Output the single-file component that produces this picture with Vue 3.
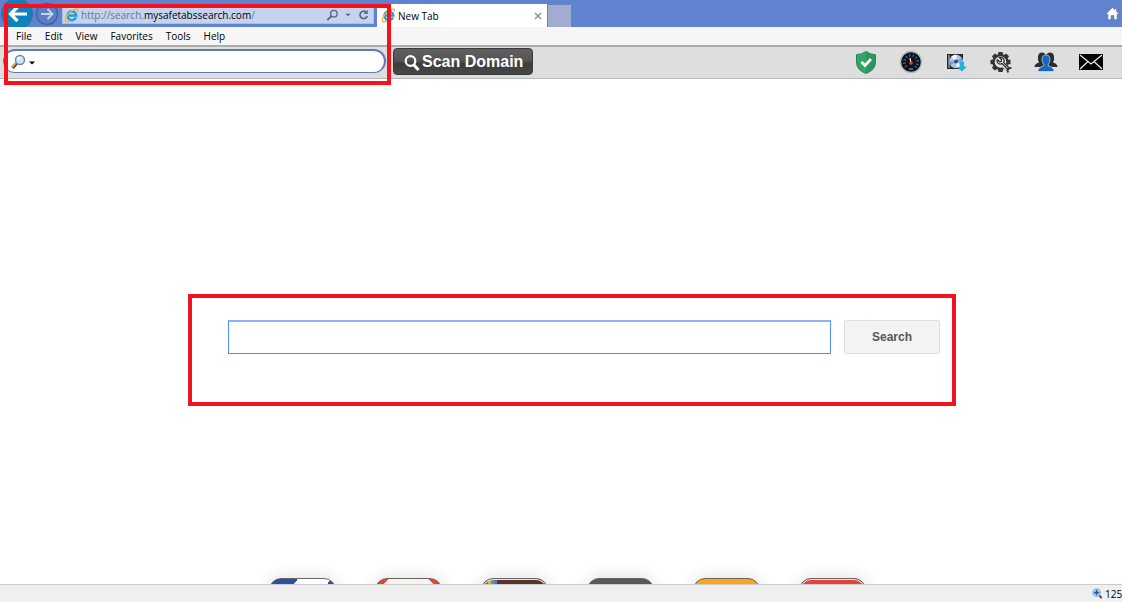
<script setup>
import { ref } from 'vue'

const address = ref('')
const query = ref('')
const menus = ['File', 'Edit', 'View', 'Favorites', 'Tools', 'Help']
const tiles = ['facebook', 'mail', 'camera', 'dark', 'orange', 'red']
const ticks = [-130, -100, -70, -40, -10, 20, 50, 80, 110, 135]
const teeth = [0, 45, 90, 135, 180, 225, 270, 315]
</script>

<template>
  <div class="browser">
    <header class="titlebar">
      <button class="nav back" aria-label="Back">
        <svg viewBox="0 0 32 32" width="32" height="32">
          <circle cx="16" cy="16" r="15.5" fill="#0c83bd" stroke="#3c69ae" />
          <path d="M26 16H10M16.500 9L9.500 16l7 7" fill="none" stroke="#fff" stroke-width="3.200" />
        </svg>
      </button>
      <button class="nav forward" aria-label="Forward">
        <svg viewBox="0 0 24 24" width="24" height="24">
          <circle cx="12" cy="12" r="10.500" fill="#5a7ec8" stroke="#48609b" stroke-width="1.300" />
          <path d="M6 12h11M12.500 7l5 5-5 5" fill="none" stroke="#c9d5ef" stroke-width="1.800" />
        </svg>
      </button>
      <div class="address">
        <svg class="ie" viewBox="0 0 16 16" width="15" height="15">
          <path d="M12.800 10.200A4.800 4.800 0 1 1 13.200 8H5" fill="none" stroke="#249bdc" stroke-width="2.500" />
          <path d="M2.200 14.500C-1 12 6 2.500 13 1.300c2-.3 2 1.200 1.200 2.700M2.200 14.500c1.300.5 3-.3 4-1" fill="none" stroke="#eeb52d" stroke-width="1.400" />
        </svg>
        <span class="url">http://search.<b>mysafetabssearch.com</b>/</span>
        <button class="tool" aria-label="Search address">
          <svg viewBox="0 0 14 14" width="13" height="13"><circle cx="8.500" cy="5" r="3.500" fill="none" stroke="#59647b" stroke-width="1.400" /><path d="M6 7.500L1.500 12" stroke="#59647b" stroke-width="2" /></svg>
        </button>
        <button class="tool caret" aria-label="Show suggestions">
          <svg viewBox="0 0 8 6" width="6" height="4"><path d="M0 1h8L4 5z" fill="#59647b" /></svg>
        </button>
        <button class="tool" aria-label="Refresh">
          <svg viewBox="0 0 14 14" width="13" height="13"><path d="M10 3.500A4 4 0 1 0 11 7.500" fill="none" stroke="#59647b" stroke-width="1.700" /><path d="M11.500 1v4.500H7z" fill="#59647b" /></svg>
        </button>
      </div>
      <div class="tab">
        <svg class="ie" viewBox="0 0 16 16" width="15" height="15">
          <path d="M12.800 10.200A4.800 4.800 0 1 1 13.200 8H5" fill="none" stroke="#249bdc" stroke-width="2.500" />
          <path d="M2.200 14.500C-1 12 6 2.500 13 1.300c2-.3 2 1.200 1.200 2.700M2.200 14.500c1.300.5 3-.3 4-1" fill="none" stroke="#eeb52d" stroke-width="1.400" />
        </svg>
        <span class="tab-name">New Tab</span>
        <button class="tool" aria-label="Close tab">
          <svg viewBox="0 0 8 8" width="8" height="8"><path d="M1 1l6 6M7 1L1 7" stroke="#929292" stroke-width="1.500" /></svg>
        </button>
      </div>
      <button class="new-tab" aria-label="Open new tab"></button>
      <button class="tool home" aria-label="Home">
        <svg viewBox="0 0 13 13" width="13" height="13"><path d="M6.500 0.500L0.500 6.500l1 1L2 7v5.500h3V8.500h3v4h3V7l.5.500 1-1-2-2V1.500H9v1.500z" fill="#fff" stroke="#75778d" stroke-width=".5" /></svg>
      </button>
    </header>

    <nav class="menubar">
      <button v-for="menu in menus" :key="menu">{{ menu }}</button>
    </nav>

    <div class="toolbar">
      <div class="pill">
        <button class="tool engine" aria-label="Choose search engine">
          <svg viewBox="0 0 26 16" width="26" height="16">
            <path d="M5.500 9.500L1.500 14" stroke="#4a3b22" stroke-width="3.200" />
            <path d="M5 9L1 13.500" stroke="#e0a52c" stroke-width="1.800" />
            <circle cx="9" cy="6" r="4.500" fill="#c5ebfb" stroke="#79838e" stroke-width="1.400" />
            <path d="M6.500 5.500Q7 3.500 9.500 3.500" fill="none" stroke="#fff" stroke-width="1.500" />
            <path d="M18 7.500h6l-3 3z" fill="#000" />
          </svg>
        </button>
        <input v-model="address" type="text" aria-label="Toolbar search" />
      </div>
      <button class="scan">
        <svg viewBox="0 0 16 18" width="16" height="18"><circle cx="6.500" cy="8" r="4.800" fill="none" stroke="#fff" stroke-width="2.200" /><path d="M9.500 11.500l5 5.500" stroke="#fff" stroke-width="3" /></svg>
        Scan Domain
      </button>
      <div class="shortcuts">
        <button aria-label="Protection">
          <svg viewBox="0 0 24 24" width="24" height="24">
            <path d="M12 1.500Q16 4.500 21.500 4.700V12q0 8-9.500 11.500Q2.500 20 2.500 12V4.700Q8 4.500 12 1.500z" fill="#35a568" stroke="#238750" />
            <path d="M12 2Q16 5 21 5.200V12q0 7.500-9 11z" fill="#278957" opacity=".55" />
            <path d="M7.500 12l3.500 3.500 6-6.500" fill="none" stroke="#fff" stroke-width="2.600" />
          </svg>
        </button>
        <button aria-label="Speed">
          <svg viewBox="0 0 24 24" width="24" height="24">
            <circle cx="12" cy="12" r="10.500" fill="#111316" stroke="#b4b9bf" stroke-width="1.400" />
            <path v-for="t in ticks" :key="t" d="M12 4v2.500" stroke="#237bc1" stroke-width="1.200" :transform="`rotate(${t} 12 12)`" />
            <path d="M12 13l-1-5" stroke="#fff" stroke-width="1.200" />
            <circle cx="12" cy="13" r="1.800" fill="#d9463d" />
            <path d="M10 18h4v2h-4z" fill="#1973c6" />
          </svg>
        </button>
        <button aria-label="Downloads">
          <svg viewBox="0 0 24 24" width="24" height="24">
            <path d="M3 4h16v15H3z" fill="#25272b" />
            <path d="M4 5h2v13H4z" fill="#70767e" />
            <circle cx="12" cy="11.500" r="6.800" fill="#b4c5dc" />
            <path d="M12 11.500L7 7q3-3 6-2zM12 11.500l6 4q-2 3-5 2.500z" fill="#eef7ff" />
            <path d="M12 11.500l6-4 1 4zM12 11.500l-6 4-1-4z" fill="#6ba0dc" />
            <circle cx="12" cy="11.500" r="2" fill="#344c72" />
            <path d="M15.500 12H20v4.500h3L18 21.500 12.500 17h3z" fill="#21b2da" />
          </svg>
        </button>
        <button aria-label="Settings">
          <svg viewBox="0 0 24 24" width="24" height="24">
            <g fill="#333"><path v-for="t in teeth" :key="t" d="M9.500 2h4l1 4h-6z" :transform="`rotate(${t} 11.500 12)`" /></g>
            <circle cx="11.500" cy="12" r="6.800" fill="#e4e4e4" stroke="#333" stroke-width="2" />
            <path d="M13 13.500l9 8.500" stroke="#dedede" stroke-width="5" />
            <path d="M8.200 9.500l2.300 2.300 1.800-.3.300-1.800-2.200-2.200q3.500-.8 4.600 2 .6 1.600-.3 3.200l6 5.800M8.200 9.500q-.7 3.500 2.200 4.400 1.400.4 2.600-.4l6.500 6.500" fill="none" stroke="#333" stroke-width="1.300" />
            <path d="M18 20.500q1-3 4.500-2.300M19 22.500l-.5-3" fill="none" stroke="#333" stroke-width="1.800" />
          </svg>
        </button>
        <button aria-label="People">
          <svg viewBox="0 0 24 24" width="24" height="24">
            <path d="M.5 17q0-3.500 4.500-4.500Q3.500 10 4 6.500 4.500 2.500 8 2.500q2.500 0 3.500 2h1q1-2 3.500-2 3.500 0 4 4 .5 3.500-1 6 4.500 1 4.500 4.500z" fill="#292c31" />
            <path d="M8 9.500Q8 5 12 5t4 4.500q0 3-1.700 4.700V16q5.700 1 5.700 5.500H4q0-4.500 5.700-5.500v-1.800Q8 12.500 8 9.500z" fill="#1767bd" stroke="#dedede" stroke-width=".7" />
          </svg>
        </button>
        <button aria-label="Mail">
          <svg viewBox="0 0 24 24" width="24" height="24">
            <path d="M0 4h24v16H0z" fill="#000" />
            <path d="M1 5l11 9L23 5M1 19l8-7.500M23 19l-8-7.500" fill="none" stroke="#eee" stroke-width="1.200" />
          </svg>
        </button>
      </div>
    </div>

    <main class="page">
      <form class="search-panel" @submit.prevent>
        <input v-model="query" type="text" aria-label="Search the web" />
        <button type="submit">Search</button>
      </form>
      <div class="tiles">
        <a v-for="tile in tiles" :key="tile" href="#" class="tile" :class="tile" :aria-label="tile"></a>
      </div>
    </main>

    <footer class="statusbar">
      <svg viewBox="0 0 12 12" width="11" height="11">
        <path d="M7.500 7.500l3 3.500" stroke="#6b3d28" stroke-width="2.200" />
        <circle cx="5" cy="5" r="4.200" fill="#bfe1fb" stroke="#82a6cc" />
        <path d="M2 5h6M5 2v6" stroke="#1565b7" stroke-width="1.800" />
      </svg>
      <span>125%</span>
    </footer>

    <div class="marker"></div>
  </div>
</template>

<style>
body {
  margin: 0;
}
</style>

<style scoped>
.browser {
  position: relative;
  display: flex;
  flex-direction: column;
  height: 100vh;
  overflow: hidden;
  background: #fff;
  color: #000;
  font: 10px/14px "Open Sans", "Noto Sans", sans-serif;
}
button {
  margin: 0;
  padding: 0;
  border: 0;
  background: none;
  color: inherit;
  font: inherit;
}
input {
  box-sizing: border-box;
  min-width: 0;
  outline: 0;
}
svg {
  display: block;
  flex: none;
}
.titlebar {
  display: flex;
  box-sizing: border-box;
  flex: none;
  height: 27px;
  overflow: hidden;
  background: #6083cf;
}
.nav {
  flex: none;
}
.back {
  width: 32px;
  height: 32px;
  margin: -2px 0 0 1px;
}
.forward {
  width: 24px;
  height: 24px;
  margin: 2px 3px 0 2px;
}
.address {
  display: flex;
  align-items: center;
  box-sizing: border-box;
  width: 312px;
  height: 18px;
  margin-top: 6px;
  padding: 0 3px 0 1px;
  gap: 6px;
  border: 1px solid #aebede;
  background: #c6d3ee;
}
.url {
  flex: 1;
  margin-left: -4px;
  color: #6b7386;
  white-space: nowrap;
}
.url b {
  color: #000;
  font-weight: 400;
}
.tool {
  display: flex;
  align-items: center;
}
.tab {
  display: flex;
  align-items: center;
  box-sizing: border-box;
  width: 170px;
  height: 23px;
  margin: 4px 0 0 3px;
  padding: 0 5px 0 4px;
  gap: 2px;
  background: #fff;
}
.tab-name {
  flex: 1;
}
.new-tab {
  box-sizing: border-box;
  width: 25px;
  height: 23px;
  margin-top: 4px;
  border: 1px solid #6f82b4;
  border-bottom: 0;
  background: #a0add0;
}
.home {
  margin: 0 3px 0 auto;
}
.menubar {
  display: flex;
  box-sizing: border-box;
  flex: none;
  height: 20px;
  padding-left: 16px;
  gap: 13px;
  border-bottom: 2px solid #adadad;
  background: #f6f6f6;
}
.toolbar {
  display: flex;
  align-items: flex-start;
  box-sizing: border-box;
  flex: none;
  height: 32px;
  padding: 1px 19px 0 3px;
  gap: 7px;
  border-bottom: 1px solid #b4b8bd;
  background: #dedede;
}
.pill {
  display: flex;
  align-items: center;
  box-sizing: border-box;
  width: 383px;
  height: 24px;
  margin-top: 1px;
  padding: 0 12px 0 7px;
  border: 2px solid #5b7cb8;
  border-width: 2px 2px 1px 1px;
  border-radius: 12px;
  background: #fff;
}
.pill input {
  flex: 1;
  border: 0;
  background: none;
}
.scan {
  display: flex;
  align-items: flex-start;
  box-sizing: border-box;
  flex: none;
  height: 27px;
  width: 140px;
  padding: 4px 10px 0;
  gap: 2px;
  border: 1px solid #3a3a3a;
  border-radius: 4px;
  background: linear-gradient(#606060, #555 45%, #3c3c3c 60%, #484848);
  color: #fff;
  font: bold 16px/18px "Liberation Sans", Arial, sans-serif;
  white-space: nowrap;
}
.shortcuts {
  display: flex;
  gap: 21px;
  margin: 2px 0 0 auto;
}
.page {
  display: flex;
  flex: 1;
  flex-direction: column;
  min-height: 0;
  overflow: hidden;
}
.search-panel {
  display: flex;
  flex: none;
  align-items: flex-start;
  margin: 215px 166px 0 188px;
  padding: 22px 12px 48px 36px;
  gap: 13px;
  border: 4px solid #ed1620;
}
.search-panel input {
  flex: 1;
  height: 34px;
  padding: 0 8px;
  border: 1px solid #4d8ff5;
  border-top: 2px solid #8eb1ef;
  background: #fff;
  font: 14px/18px "Liberation Sans", Arial, sans-serif;
}
.search-panel button {
  box-sizing: border-box;
  width: 96px;
  height: 34px;
  border: 1px solid #dedede;
  border-radius: 2px;
  background: #f3f3f3;
  color: #555;
  font: bold 12px/16px "Liberation Sans", Arial, sans-serif;
}
.tiles {
  display: flex;
  flex: none;
  justify-content: center;
  height: 6px;
  margin-top: auto;
  padding-left: 12px;
  gap: 39px;
}
.tile {
  box-sizing: border-box;
  flex: none;
  width: 67px;
  height: 67px;
  border: 1px solid #666;
  border-radius: 12px;
  box-shadow: 0 0 18px rgba(0, 0, 0, 0.14);
}
.facebook {
  background: linear-gradient(125deg, #2c4f9e 25%, #fff 25% 55%, transparent 55%), linear-gradient(90deg, #fff 56px, #2c4f9e 56px);
}
.mail {
  background: linear-gradient(225deg, #e84438 9px, transparent 9px), linear-gradient(135deg, #e84438 9px, #f7f4ee 9px);
}
.camera {
  background: linear-gradient(90deg, #c84a3c 6px, #d9b24a 6px 9px, #6c9b6a 9px 12px, #4e7fae 12px 15px, #553529 15px);
  box-shadow: inset 0 0 0 1px #e8e4e0, 0 0 18px rgba(0, 0, 0, 0.14);
}
.dark {
  background: #555958;
}
.orange {
  background: #fda417;
}
.red {
  background: #e54239;
  box-shadow: inset 0 0 0 1px #f6dedb, 0 0 18px rgba(0, 0, 0, 0.14);
}
.statusbar {
  display: flex;
  align-items: center;
  box-sizing: border-box;
  flex: none;
  height: 18px;
  padding-left: calc(100% - 30px);
  gap: 2px;
  overflow: hidden;
  border-top: 1px solid #cbcbcb;
  background: #efefef;
}
.marker {
  position: absolute;
  top: 4px;
  left: 4px;
  box-sizing: border-box;
  width: 387px;
  height: 81px;
  border: 4px solid #f5121d;
  pointer-events: none;
}
</style>
